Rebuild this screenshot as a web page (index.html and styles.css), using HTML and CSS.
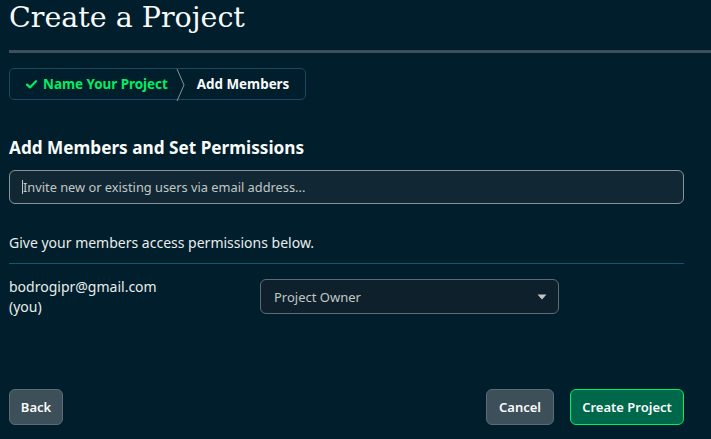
FILE: index.html
```html
<!DOCTYPE html>
<html>
<head>
<meta charset="utf-8">
<link rel="stylesheet" href="styles.css">
</head>
<body>
<div class="page">
  <h1 class="title">Create a Project</h1>
  <div class="rule"></div>
  <div class="crumbs">
    <div class="crumb done">
      <svg class="check" width="11" height="9" viewBox="0 0 11 9"><path d="M1 4.6 L4 7.4 L10 1.2" fill="none" stroke="#00ED64" stroke-width="2.2" stroke-linecap="round" stroke-linejoin="round"/></svg>
      <span>Name Your Project</span>
    </div>
    <svg class="sep" width="10" height="32" viewBox="0 0 10 32"><path d="M1 0 L8 16 L1 32" fill="none" stroke="#889397" stroke-width="1"/></svg>
    <div class="crumb current">Add Members</div>
  </div>
  <h2 class="heading">Add Members and Set Permissions</h2>
  <div class="input"><span class="caret"></span><span class="placeholder">Invite new or existing users via email address...</span></div>
  <p class="hint">Give your members access permissions below.</p>
  <div class="divider"></div>
  <div class="member">
    <div class="who">bodrogipr@gmail.com<br>(you)</div>
    <div class="select">
      <span>Project Owner</span>
      <svg width="10" height="6" viewBox="0 0 10 6"><path d="M0.5 0.5 H9.5 L5 5.5 Z" fill="#C1C7C6"/></svg>
    </div>
  </div>
  <div class="footer">
    <button class="btn back">Back</button>
    <div class="right">
      <button class="btn cancel">Cancel</button>
      <button class="btn primary">Create Project</button>
    </div>
  </div>
</div>
</body>
</html>
```
FILE: styles.css
```css
html, body {
  margin: 0;
  background: #001E2B;
  height: 100%;
}
.page {
  padding: 0 27px 0 9px;
  font-family: "Noto Sans", sans-serif;
  color: #E8EDEB;
  position: relative;
  height: 439px;
  box-sizing: border-box;
}
.title {
  margin: 0;
  font-family: "DejaVu Serif", serif;
  font-weight: normal;
  font-size: 28.5px;
  line-height: 36px;
  color: #F9FBFA;
}
.rule {
  margin-top: 14px;
  height: 3px;
  background: #3D4F58;
  margin-right: -27px;
}
.crumbs {
  margin-top: 15px;
  display: inline-flex;
  align-items: stretch;
  height: 30px;
  border: 1px solid #194A5F;
  border-radius: 5px;
  width: 295px;
  box-sizing: content-box;
}
.crumb {
  display: flex;
  align-items: center;
  font-size: 13.4px;
  font-weight: 700;
}
.crumb.done {
  color: #00ED64;
  padding-left: 16px;
  gap: 6px;
  padding-right: 8px;
}
.crumb.current {
  color: #F9FBFA;
  padding-left: 11px;
}
.sep { display: block; }
.heading {
  margin: 37px 0 0;
  font-size: 17.2px;
  line-height: 22px;
  font-weight: 700;
  color: #F9FBFA;
}
.input {
  margin-top: 11px;
  height: 32px;
  border: 1px solid #889397;
  border-radius: 6px;
  background: #112733;
  display: flex;
  align-items: center;
  padding-left: 12px;
  font-size: 12.8px;
  color: #C1C7C6;
}
.caret {
  width: 1px;
  height: 14px;
  background: #C1C7C6;
}
.hint {
  margin: 31px 0 0;
  font-size: 14px;
  line-height: 16px;
  color: #E8EDEB;
}
.divider {
  margin-top: 12px;
  height: 1px;
  background: #10586F;
}
.member {
  margin-top: 14px;
  display: flex;
  align-items: flex-start;
}
.who {
  width: 251px;
  font-size: 14px;
  line-height: 20px;
  margin-top: -1px;
}
.select {
  margin-top: 1px;
  width: 299px;
  height: 35px;
  box-sizing: border-box;
  border: 1px solid #5C6C75;
  border-radius: 6px;
  background: #0E202B;
  display: flex;
  align-items: center;
  justify-content: space-between;
  padding: 0 11px 0 13px;
  font-size: 13px;
  color: #C1C7C6;
}
.footer {
  position: absolute;
  left: 9px;
  right: 27px;
  top: 389px;
  display: flex;
  justify-content: space-between;
}
.right { display: flex; gap: 16px; }
.btn {
  height: 36px;
  padding: 0;
  border: 1px solid #5C6C75;
  border-radius: 6px;
  background: #3D4F58;
  color: #F9FBFA;
  font-family: "Noto Sans", sans-serif;
  font-size: 13px;
  font-weight: 600;
}
.btn.back { width: 54px; }
.btn.cancel { width: 68px; }
.btn.primary {
  width: 114px;
  background: #00684A;
  border-color: #00ED64;
}
```
